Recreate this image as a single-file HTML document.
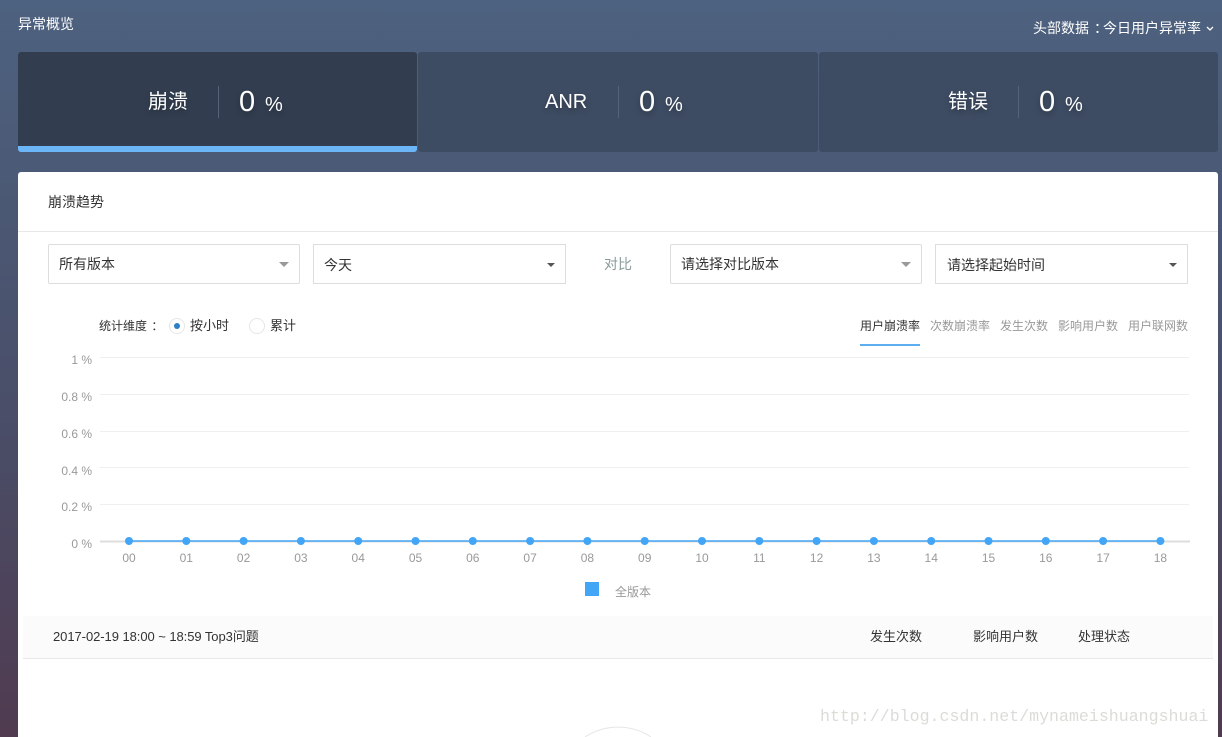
<!DOCTYPE html>
<html lang="zh">
<head>
<meta charset="utf-8">
<title>异常概览</title>
<style>
*{margin:0;padding:0;box-sizing:border-box}
html,body{width:1222px;height:737px;overflow:hidden}
body{position:relative;font-family:"Liberation Sans","Noto Sans CJK SC",sans-serif;background:linear-gradient(180deg,#4d6280 0,#4b5a76 170px,#4a4c66 450px,#503b50 737px)}
.t{position:absolute;white-space:nowrap;line-height:20px}
.w{color:#fff}
.cn{display:inline-block;transform:translateX(.36em)}
.card{position:absolute;top:52px;height:100px;background:#3e4c63;border-radius:3px}
.lab{color:#fff;font-size:20px;text-shadow:0 3px 6px rgba(0,0,0,.3)}
.num{color:#fff;font-size:29px;text-shadow:0 3px 6px rgba(0,0,0,.3)}
.pct{color:#fff;font-size:20px;text-shadow:0 3px 6px rgba(0,0,0,.3)}
.sep{position:absolute;top:86px;width:1px;height:32px;background:#56637a}
#panel{position:absolute;left:18px;top:172px;width:1200px;height:565px;background:#fff;border-radius:3px 3px 0 0}
.sel{position:absolute;top:244px;height:40px;border:1px solid #ddd;background:#fff}
.sel.r{border-radius:2px}
.c14{font-size:14px;color:#333}
.c13{font-size:13px;color:#333}
.c12{font-size:12px;color:#333}
.g12{font-size:12px;color:#999}
.ar{position:absolute;width:0;height:0;border-style:solid;border-color:#999 transparent transparent;border-width:5px 5px 0}
.ar2{position:absolute;width:0;height:0;border-style:solid;border-color:#555 transparent transparent;border-width:4px 4px 0}
svg{position:absolute;left:0;top:0}
</style>
</head>
<body>
<div class="t w" style="left:18px;top:14px;font-size:14px">异常概览</div>
<div class="t w" style="left:1033px;top:18px;font-size:14px">头部数据<span class="cn">：</span>今日用户异常率</div>
<svg width="1222" height="60" style="pointer-events:none"><path d="M1207 27l3 3 3-3" fill="none" stroke="#fff" stroke-width="1.3"/></svg>

<div class="card" style="left:18px;width:399px;background:#323e50;border-bottom:6px solid #6cb6f8"></div>
<div class="card" style="left:418px;width:400px"></div>
<div class="card" style="left:819px;width:399px"></div>

<div class="t lab" style="left:148px;top:92px">崩溃</div>
<div class="sep" style="left:218px"></div>
<div class="t num" style="left:239px;top:92px">0</div>
<div class="t pct" style="left:265px;top:95px">%</div>

<div class="t lab" style="left:545px;top:92px">ANR</div>
<div class="sep" style="left:618px"></div>
<div class="t num" style="left:639px;top:92px">0</div>
<div class="t pct" style="left:665px;top:95px">%</div>

<div class="t lab" style="left:948px;top:92px">错误</div>
<div class="sep" style="left:1018px"></div>
<div class="t num" style="left:1039px;top:92px">0</div>
<div class="t pct" style="left:1065px;top:95px">%</div>

<div id="panel"></div>
<div style="position:absolute;left:18px;top:231px;width:1200px;height:1px;background:#e8e8e8"></div>
<div class="t c14" style="left:48px;top:192px;font-size:14px">崩溃趋势</div>

<div class="sel r" style="left:48px;width:252px"></div>
<div class="t c14" style="left:59px;top:254px">所有版本</div>
<div class="ar" style="left:279px;top:262px"></div>

<div class="sel" style="left:313px;width:253px"></div>
<div class="t c14" style="left:324px;top:255px">今天</div>
<div class="ar2" style="left:547px;top:263px"></div>

<div class="t" style="left:604px;top:254px;font-size:14px;color:#8a9a9a">对比</div>

<div class="sel r" style="left:670px;width:252px"></div>
<div class="t c14" style="left:681px;top:254px">请选择对比版本</div>
<div class="ar" style="left:901px;top:262px"></div>

<div class="sel" style="left:935px;width:253px"></div>
<div class="t c14" style="left:947px;top:255px">请选择起始时间</div>
<div class="ar2" style="left:1169px;top:263px"></div>

<div class="t" style="left:99px;top:316px;font-size:12px;color:#333">统计维度<span class="cn">：</span></div>
<div style="position:absolute;left:169px;top:318px;width:16px;height:16px;border:1px solid #e6e6e6;border-radius:50%;background:#fff"></div>
<div style="position:absolute;left:174px;top:323px;width:6px;height:6px;border-radius:50%;background:#2f7fc4"></div>
<div class="t c13" style="left:190px;top:316px">按小时</div>
<div style="position:absolute;left:249px;top:318px;width:16px;height:16px;border:1px solid #e6e6e6;border-radius:50%;background:#fff"></div>
<div class="t c13" style="left:270px;top:316px">累计</div>

<div class="t c12" style="left:860px;top:316px">用户崩溃率</div>
<div style="position:absolute;left:860px;top:344px;width:60px;height:2px;background:#5caef0"></div>
<div class="t g12" style="left:930px;top:316px">次数崩溃率</div>
<div class="t g12" style="left:1000px;top:316px">发生次数</div>
<div class="t g12" style="left:1058px;top:316px">影响用户数</div>
<div class="t g12" style="left:1128px;top:316px">用户联网数</div>

<svg width="1222" height="737">
<g stroke="#efefef" stroke-width="1">
<path d="M100 357.5H1189M100 394.5H1189M100 431.5H1189M100 467.5H1189M100 504.5H1189"/>
</g>
<path d="M100 541.5H1190" stroke="#dddddd" stroke-width="2"/>
<path d="M129 541H1161" stroke="#42a5f5" stroke-width="1.5"/>
<g fill="#42a5f5">
<circle cx="129" cy="541" r="4"/><circle cx="186.3" cy="541" r="4"/><circle cx="243.6" cy="541" r="4"/><circle cx="300.9" cy="541" r="4"/><circle cx="358.2" cy="541" r="4"/><circle cx="415.5" cy="541" r="4"/><circle cx="472.8" cy="541" r="4"/><circle cx="530.1" cy="541" r="4"/><circle cx="587.4" cy="541" r="4"/><circle cx="644.7" cy="541" r="4"/><circle cx="702" cy="541" r="4"/><circle cx="759.3" cy="541" r="4"/><circle cx="816.6" cy="541" r="4"/><circle cx="873.9" cy="541" r="4"/><circle cx="931.2" cy="541" r="4"/><circle cx="988.5" cy="541" r="4"/><circle cx="1045.8" cy="541" r="4"/><circle cx="1103.1" cy="541" r="4"/><circle cx="1160.4" cy="541" r="4"/>
</g>
<g font-family="Liberation Sans, sans-serif" font-size="12" fill="#999" text-anchor="end">
<text x="92" y="364">1 %</text><text x="92" y="401">0.8 %</text><text x="92" y="438">0.6 %</text><text x="92" y="475">0.4 %</text><text x="92" y="511">0.2 %</text><text x="92" y="548">0 %</text>
</g>
<g font-family="Liberation Sans, sans-serif" font-size="12" fill="#999" text-anchor="middle">
<text x="129" y="562">00</text><text x="186.3" y="562">01</text><text x="243.6" y="562">02</text><text x="300.9" y="562">03</text><text x="358.2" y="562">04</text><text x="415.5" y="562">05</text><text x="472.8" y="562">06</text><text x="530.1" y="562">07</text><text x="587.4" y="562">08</text><text x="644.7" y="562">09</text><text x="702" y="562">10</text><text x="759.3" y="562">11</text><text x="816.6" y="562">12</text><text x="873.9" y="562">13</text><text x="931.2" y="562">14</text><text x="988.5" y="562">15</text><text x="1045.8" y="562">16</text><text x="1103.1" y="562">17</text><text x="1160.4" y="562">18</text>
</g>
<rect x="585" y="582" width="14" height="14" fill="#42a5f5"/>
<path d="M585 737A60 60 0 0 1 651 737" fill="none" stroke="#e6e6e6" stroke-width="1"/>
</svg>
<div class="t g12" style="left:615px;top:582px">全版本</div>

<div style="position:absolute;left:23px;top:616px;width:1190px;height:43px;background:#fbfbfb;border-bottom:1px solid #e8e8e8"></div>
<div class="t" style="left:53px;top:627px;font-size:13px;color:#333;letter-spacing:-.06px">2017-02-19 18:00 ~ 18:59 Top3问题</div>
<div class="t c13" style="left:870px;top:627px">发生次数</div>
<div class="t c13" style="left:973px;top:627px">影响用户数</div>
<div class="t c13" style="left:1078px;top:627px">处理状态</div>

<div class="t" style="left:820px;top:707px;font-family:'Liberation Mono',monospace;font-size:16.6px;color:#dcdcd6">http://blog.csdn.net/mynameishuangshuai</div>
</body>
</html>
